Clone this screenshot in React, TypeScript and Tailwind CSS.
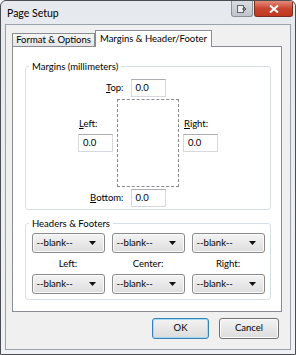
import React from 'react';

const font = { fontFamily: 'Lato, "Noto Sans", sans-serif' };

function Field({ value = '0.0' }: { value?: string }) {
  return (
    <div className="h-[18px] w-[35px] border border-[#d5d9de] border-t-[#abadb3] bg-white pl-[4px] text-[9.5px] leading-[16px] text-black">
      {value}
    </div>
  );
}

function Label({ text, u }: { text: string; u: number }) {
  return (
    <span className="text-[9.5px] leading-[12px] text-black">
      {text.slice(0, u)}
      <span className="underline">{text.slice(u, u + 1)}</span>
      {text.slice(u + 1)}
    </span>
  );
}

function Drop() {
  return (
    <div className="flex h-[20px] w-[73px] items-center justify-between rounded-[3px] border border-[#8a8a8a] bg-gradient-to-b from-[#f4f4f4] to-[#dddddd] pl-[4px] pr-[8px] text-[9.5px] text-black shadow-[inset_0_0_0_1px_#fbfbfb]">
      <span>--blank--</span>
      <svg width="7" height="4" viewBox="0 0 7 4">
        <path d="M0 0h7L3.5 4z" fill="#111" />
      </svg>
    </div>
  );
}

function Btn({ text, focus }: { text: string; focus?: boolean }) {
  return (
    <div
      className={
        'flex h-[21px] items-center justify-center rounded-[3px] border bg-gradient-to-b from-[#f3f3f3] to-[#dcdcdc] text-[9.5px] text-black ' +
        (focus ? 'w-[57px] border-[#3c7fb1] shadow-[inset_0_0_0_1px_#9fdcf8]' : 'w-[60px] border-[#707070] shadow-[inset_0_0_0_1px_#fbfbfb]')
      }
    >
      {text}
    </div>
  );
}

export default function App() {
  return (
    <div style={font} className="flex h-[355px] w-[296px] flex-col overflow-hidden rounded-t-[6px] border border-[#4a4d52] bg-gradient-to-b from-[#e6e9ed] to-[#f0f2f5] px-[4px] pb-[4px]">
      <div className="flex h-[23px] shrink-0 items-start justify-between">
        <span className="pl-[2px] pt-[5px] text-[10.5px] leading-[14px] text-black">Page Setup</span>
        <div className="mr-[-2px] flex gap-[1px]">
          <div className="flex h-[16px] w-[22px] items-center justify-center rounded-b-[3px] border border-t-0 border-[#8b9097] bg-gradient-to-b from-[#d9dde2] to-[#bfc4ca]">
            <svg width="10" height="8" viewBox="0 0 10 8">
              <rect x="0.5" y="0.5" width="6" height="7" fill="#eee" stroke="#666" />
              <path d="M5 4h4M7 2l2 2-2 2" stroke="#555" fill="none" />
            </svg>
          </div>
          <div className="flex h-[16px] w-[39px] items-center justify-center rounded-b-[3px] border border-t-0 border-[#7a2d22] bg-gradient-to-b from-[#e28a78] via-[#c9452f] to-[#c0391f]">
            <svg width="10" height="8" viewBox="0 0 10 8">
              <path d="M1 0.5l8 7M9 0.5l-8 7" stroke="#fff" strokeWidth="2" />
            </svg>
          </div>
        </div>
      </div>

      <div className="flex flex-1 flex-col border border-[#9aa1aa] bg-[#f0f0f0] pb-[10px] pl-[6px] pr-[8px] pt-[5px]">
        <div className="flex items-end">
          <div className="mb-[-1px] flex h-[14px] w-[83px] items-center justify-center border border-[#898c95] border-b-0 bg-gradient-to-b from-[#f6f6f6] to-[#e3e3e3] text-[9.5px] text-black">
            Format &amp; Options
          </div>
          <div className="relative z-10 mb-[-1px] flex h-[17px] w-[117px] items-center justify-center border border-[#898c95] border-b-0 bg-white text-[9.5px] text-black">
            Margins &amp; Header/Footer
          </div>
        </div>

        <div className="flex h-[266px] flex-col gap-[7px] border border-[#898c95] bg-white pl-[12px] pr-[10px] pt-[13px]">
          <fieldset className="h-[150px] rounded-[3px] border border-[#d8dfe5]">
            <legend className="ml-[3px] px-[3px] text-[9.5px] leading-[13px] text-black">Margins (millimeters)</legend>
            <div className="mt-[6px] flex flex-col items-center">
              <div className="grid grid-cols-[1fr_auto_1fr] items-center">
                <div className="flex justify-end pr-[7px]">
                  <Label text="Top:" u={0} />
                </div>
                <Field />
                <div />
              </div>
              <div className="mt-[2px] grid grid-cols-[35px_62px_35px] gap-x-[4px]">
                <div className="flex flex-col gap-[4px] pt-[19px]">
                  <div className="pl-[1px] text-[9.5px] leading-[12px]"><Label text="Left:" u={0} /></div>
                  <Field />
                </div>
                <div className="h-[88px] border border-dashed border-[#8a8a8a]" />
                <div className="flex flex-col gap-[4px] pt-[19px]">
                  <div className="pl-[1px] text-[9.5px] leading-[12px]"><Label text="Right:" u={0} /></div>
                  <Field />
                </div>
              </div>
              <div className="mt-[2px] grid grid-cols-[1fr_auto_1fr] items-center">
                <div className="flex justify-end pr-[7px]">
                  <Label text="Bottom:" u={0} />
                </div>
                <Field />
                <div />
              </div>
            </div>
          </fieldset>

          <fieldset className="h-[83px] rounded-[3px] border border-[#d8dfe5]">
            <legend className="ml-[3px] px-[3px] text-[9.5px] leading-[13px] text-black">Headers &amp; Footers</legend>
            <div className="mt-[3px] grid grid-cols-[73px_73px_73px] justify-center gap-x-[7px]">
              <Drop />
              <Drop />
              <Drop />
              <span className="py-[4px] text-center text-[9.5px] leading-[13px] text-black">Left:</span>
              <span className="py-[4px] text-center text-[9.5px] leading-[13px] text-black">Center:</span>
              <span className="py-[4px] text-center text-[9.5px] leading-[13px] text-black">Right:</span>
              <Drop />
              <Drop />
              <Drop />
            </div>
          </fieldset>
        </div>

        <div className="mt-[6px] flex justify-end gap-[10px] pr-[3px]">
          <Btn text="OK" focus />
          <Btn text="Cancel" />
        </div>
      </div>
    </div>
  );
}
